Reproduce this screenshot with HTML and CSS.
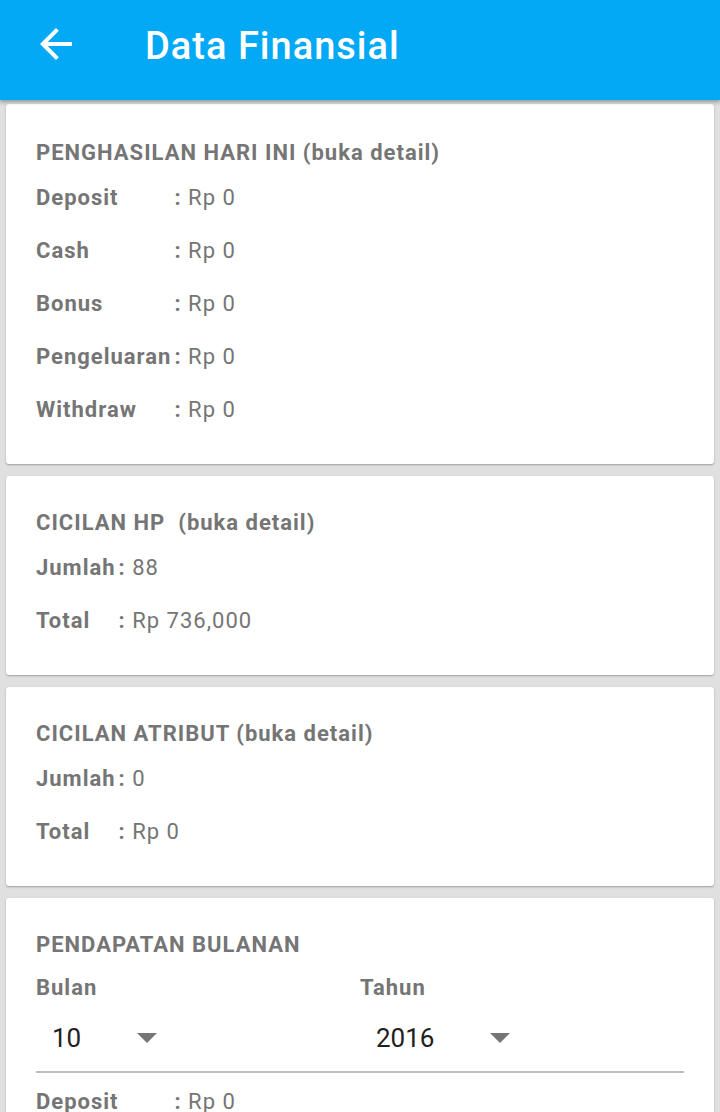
FILE: index.html
```html
<!DOCTYPE html>
<html>
<head>
<meta charset="utf-8">
<link rel="stylesheet" href="styles.css">
</head>
<body>
<div class="screen">
  <header class="appbar">
    <svg class="back" viewBox="0 0 24 24" width="48" height="48"><path fill="#fff" d="M20 11H7.83l5.59-5.59L12 4l-8 8 8 8 1.41-1.41L7.83 13H20v-2z"/></svg>
    <h1 class="appbar-title">Data Finansial</h1>
  </header>
  <main class="content">
    <section class="card card-first">
      <div class="card-title">PENGHASILAN HARI INI (buka detail)</div>
      <div class="rows">
        <span class="label">Deposit</span><span class="value"><b>:</b> Rp 0</span>
        <span class="label">Cash</span><span class="value"><b>:</b> Rp 0</span>
        <span class="label">Bonus</span><span class="value"><b>:</b> Rp 0</span>
        <span class="label">Pengeluaran</span><span class="value"><b>:</b> Rp 0</span>
        <span class="label">Withdraw</span><span class="value"><b>:</b> Rp 0</span>
      </div>
    </section>
    <section class="card">
      <div class="card-title">CICILAN HP&nbsp; (buka detail)</div>
      <div class="rows">
        <span class="label">Jumlah</span><span class="value"><b>:</b> 88</span>
        <span class="label">Total</span><span class="value"><b>:</b> Rp 736,000</span>
      </div>
    </section>
    <section class="card">
      <div class="card-title">CICILAN ATRIBUT (buka detail)</div>
      <div class="rows">
        <span class="label">Jumlah</span><span class="value"><b>:</b> 0</span>
        <span class="label">Total</span><span class="value"><b>:</b> Rp 0</span>
      </div>
    </section>
    <section class="card">
      <div class="card-title">PENDAPATAN BULANAN</div>
      <div class="picker">
        <div class="picker-col">
          <div class="picker-label">Bulan</div>
          <div class="spinner"><span class="spinner-text">10</span><span class="caret"></span></div>
        </div>
        <div class="picker-col">
          <div class="picker-label">Tahun</div>
          <div class="spinner"><span class="spinner-text">2016</span><span class="caret"></span></div>
        </div>
      </div>
      <div class="divider"></div>
      <div class="rows">
        <span class="label">Deposit</span><span class="value"><b>:</b> Rp 0</span>
        <span class="label">Cash</span><span class="value"><b>:</b> Rp 0</span>
        <span class="label">Bonus</span><span class="value"><b>:</b> Rp 0</span>
        <span class="label">Pengeluaran</span><span class="value"><b>:</b> Rp 0</span>
        <span class="label">Withdraw</span><span class="value"><b>:</b> Rp 0</span>
      </div>
    </section>
  </main>
</div>
</body>
</html>
```

FILE: styles.css
```css
* { box-sizing: border-box; }
html, body { margin: 0; padding: 0; }
body {
  font-family: Roboto, "Noto Sans", "Liberation Sans", sans-serif;
  background: #e0e0e0;
}
.screen {
  width: 720px;
  height: 1112px;
  overflow: hidden;
  background: #e0e0e0;
}
.appbar {
  position: relative;
  z-index: 2;
  height: 100px;
  background: #03a9f4;
  display: flex;
  align-items: center;
  padding-left: 32px;
  box-shadow: 0 2px 4px rgba(0,0,0,0.35);
}
.back { display: block; margin-top: -12px; }
.appbar-title {
  margin: -8px 0 0 65px;
  font-size: 38px;
  letter-spacing: 1px;
  font-weight: 500;
  color: #fff;
}
.content {
  padding-top: 4px;
}
.card {
  background: #fff;
  margin: 0 6px 12px;
  border-radius: 3px;
  box-shadow: 0 1px 2px rgba(0,0,0,0.3);
  padding: 29px 30px 28px;
  color: #757575;
  font-size: 22px;
  letter-spacing: 1px;
}
.card-first { padding-top: 31px; }
.card-title {
  height: 36px;
  line-height: 36px;
  font-weight: 700;
}
.rows {
  display: grid;
  grid-template-columns: auto 1fr;
  grid-auto-rows: 53px;
  align-items: center;
}
.label {
  font-weight: 700;
  padding-right: 3px;
}
.value b { font-weight: 700; }
.picker {
  display: grid;
  grid-template-columns: 1fr 1fr;
}
.picker-label {
  height: 50px;
  line-height: 50px;
  font-weight: 700;
}
.spinner {
  height: 50px;
  display: flex;
  align-items: center;
  padding-left: 16px;
}
.spinner-text {
  font-size: 26px;
  letter-spacing: 0;
  color: #212121;
}
.caret {
  margin-left: 56px;
  width: 0;
  height: 0;
  border-left: 10px solid transparent;
  border-right: 10px solid transparent;
  border-top: 10px solid #757575;
}
.divider {
  margin-top: 8px;
  height: 2px;
  background: #bdbdbd;
  margin-bottom: 2px;
}
```
